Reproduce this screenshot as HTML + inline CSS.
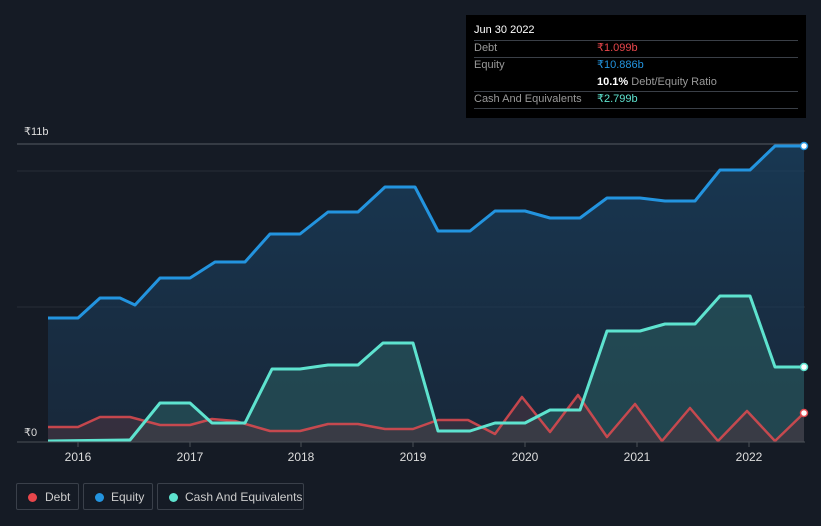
<!DOCTYPE html>
<html><head><style>
body{margin:0;width:821px;height:526px;background:#151b25;font-family:"Liberation Sans",sans-serif;overflow:hidden;position:relative}
.tt{position:absolute;left:466px;top:15px;width:340px;height:103px;background:#000;color:#fff;font-size:11px}
.tt .r{position:absolute;left:8px;right:8px;height:17px;border-bottom:1px solid #3a3f47;line-height:17px;color:#999}
.tt .v{position:absolute;left:123px}
.leg{position:absolute;top:483px;height:27px;border:1px solid #3a404a;border-radius:2px;color:#ccc;font-size:12px;line-height:27px;box-sizing:border-box}
.leg i{position:absolute;left:11px;top:9px;width:9px;height:9px;border-radius:50%}
.ax{position:absolute;top:450px;color:#ddd;font-size:12px;width:40px;text-align:center}
</style></head><body>
<svg width="821" height="526" style="position:absolute;left:0;top:0">
<defs>
<linearGradient id="ge" x1="0" y1="0" x2="0" y2="1"><stop offset="0" stop-color="#1a4466" stop-opacity=".7"/><stop offset="1" stop-color="#1a3550" stop-opacity=".5"/></linearGradient>
</defs>
<line x1="17" y1="144" x2="805" y2="144" stroke="#555b63"/>
<line x1="17" y1="171" x2="805" y2="171" stroke="#262d37"/>
<line x1="17" y1="307" x2="805" y2="307" stroke="#262d37"/>
<polygon fill="url(#ge)" points="48,442 48,318 78,318 100,298 120,298 135,305 160,278 190,278 215,262 245,262 270,234 300,234 328,212 358,212 385,187 415,187 438,231 470,231 495,211 525,211 550,218 580,218 607,198 640,198 665,201 695,201 720,170 750,170 775,146 804,146 804,442"/>
<polygon fill="#2a5a5e" fill-opacity=".6" points="48,442 48,441 130,440 160,403 190,403 212,423 245,423 272,369 300,369 328,365 358,365 383,343 413,343 438,431 470,431 495,423 525,423 550,410 580,410 607,331 640,331 665,324 695,324 720,296 750,296 775,367 804,367 804,442"/>
<polygon fill="#4a3440" fill-opacity=".6" points="48,442 48,427 78,427 100,417 130,417 160,425 190,425 212,419 235,421 270,431 300,431 328,424 358,424 385,429 413,429 438,420 468,420 495,434 522,397 550,432 578,395 607,437 635,404 662,441 690,408 718,441 747,411 775,441 804,413 804,442"/>
<polyline fill="none" stroke="#2394df" stroke-width="3" stroke-linejoin="round" points="48,318 78,318 100,298 120,298 135,305 160,278 190,278 215,262 245,262 270,234 300,234 328,212 358,212 385,187 415,187 438,231 470,231 495,211 525,211 550,218 580,218 607,198 640,198 665,201 695,201 720,170 750,170 775,146 804,146"/>
<polyline fill="none" stroke="#e04b50" stroke-opacity=".85" stroke-width="2.5" stroke-linejoin="round" points="48,427 78,427 100,417 130,417 160,425 190,425 212,419 235,421 270,431 300,431 328,424 358,424 385,429 413,429 438,420 468,420 495,434 522,397 550,432 578,395 607,437 635,404 662,441 690,408 718,441 747,411 775,441 804,413"/>
<polyline fill="none" stroke="#5ee3cf" stroke-width="3" stroke-linejoin="round" points="48,441 130,440 160,403 190,403 212,423 245,423 272,369 300,369 328,365 358,365 383,343 413,343 438,431 470,431 495,423 525,423 550,410 580,410 607,331 640,331 665,324 695,324 720,296 750,296 775,367 804,367"/>
<line x1="17" y1="442" x2="805" y2="442" stroke="#4a5058"/>
<g stroke="#4a5058"><line x1="78" y1="442" x2="78" y2="447"/><line x1="190" y1="442" x2="190" y2="447"/><line x1="301" y1="442" x2="301" y2="447"/><line x1="413" y1="442" x2="413" y2="447"/><line x1="525" y1="442" x2="525" y2="447"/><line x1="637" y1="442" x2="637" y2="447"/><line x1="749" y1="442" x2="749" y2="447"/></g>
<circle cx="804" cy="146" r="3.5" fill="#fff" stroke="#2394df" stroke-width="1.5"/>
<circle cx="804" cy="367" r="3.5" fill="#fff" stroke="#5ee3cf" stroke-width="1.5"/>
<circle cx="804" cy="413" r="3.5" fill="#fff" stroke="#e04b50" stroke-width="1.5"/>
<text x="24" y="135" fill="#ddd" font-size="11" font-family="Liberation Sans">₹11b</text>
<text x="24" y="436" fill="#ddd" font-size="11" font-family="Liberation Sans">₹0</text>
</svg>
<div class="ax" style="left:58px">2016</div><div class="ax" style="left:170px">2017</div><div class="ax" style="left:281px">2018</div><div class="ax" style="left:393px">2019</div><div class="ax" style="left:505px">2020</div><div class="ax" style="left:617px">2021</div><div class="ax" style="left:729px">2022</div>
<div class="tt">
<div style="position:absolute;left:8px;top:9px;font-size:11px">Jun 30 2022</div>
<div style="position:absolute;left:8px;right:8px;top:25px;border-top:1px solid #3a3f47"></div>
<div class="r" style="top:25px">Debt<span class="v" style="color:#e8464b">₹1.099b</span></div>
<div class="r" style="top:42px;border:none">Equity<span class="v" style="color:#2394df">₹10.886b</span></div>
<div class="r" style="top:59px"><span class="v" style="color:#999"><b style="color:#fff">10.1%</b> Debt/Equity Ratio</span></div>
<div class="r" style="top:76px">Cash And Equivalents<span class="v" style="color:#5ee3cf">₹2.799b</span></div>
</div>
<div class="leg" style="left:16px;width:63px"><i style="background:#e8464b"></i><span style="margin-left:28px">Debt</span></div>
<div class="leg" style="left:83px;width:70px"><i style="background:#2394df"></i><span style="margin-left:27px">Equity</span></div>
<div class="leg" style="left:157px;width:147px"><i style="background:#5ee3cf"></i><span style="margin-left:27px">Cash And Equivalents</span></div>
</body></html>
